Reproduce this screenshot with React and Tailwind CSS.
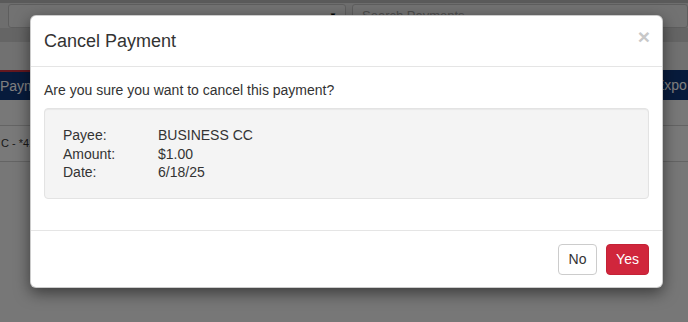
import React from "react";

const rows = [
  { label: "Payee:", value: "BUSINESS CC" },
  { label: "Amount:", value: "$1.00" },
  { label: "Date:", value: "6/18/25" },
];

export default function App() {
  return (
    <div
      className="relative w-[688px] h-[322px] overflow-hidden bg-[#eeeeee] text-[#333333]"
      style={{ fontFamily: '"Liberation Sans", Arial, sans-serif' }}
    >
      {/* page behind the dialog */}
      <div className="h-[3px] bg-[#b4b4b4]" />
      <div className="h-[25px] bg-[#dcdcdc] flex items-center gap-[6px] pl-[8px]">
        <div className="w-[338px] h-[24px] bg-[#e4e4e4] border border-[#bdbdbd] rounded-[3px] flex items-center justify-end pr-[8px]">
          <span className="text-[8px] leading-none text-black">▼</span>
        </div>
        <div className="flex-1 h-[24px] bg-[#e4e4e4] border border-[#bdbdbd] rounded-[3px] flex items-center pl-[9px] text-[13px] text-[#999999]">
          Search Payments
        </div>
      </div>
      <div className="h-[14px] bg-[#cacaca]" />
      <div className="h-[28px] bg-[#e2e2e2]" />
      <div className="h-[30px] bg-[#e8e8e8] flex justify-between">
        <div className="w-[60px] bg-[#0f3678] border-t-2 border-[#c9303f] text-white text-[14px] flex items-center">
          Payme
        </div>
        <div className="w-[60px] bg-[#0f3678] text-white text-[14px] flex items-center pl-[27px]">
          Expo
        </div>
      </div>
      <div className="h-[26px] bg-[#f0f0f0] border-b border-[#c8c8c8]" />
      <div className="h-[36px] bg-[#f2f2f2] border-b border-[#c8c8c8] flex items-center text-[11px] pl-[1px]">
        <span className="whitespace-nowrap">C - *41</span>
      </div>

      {/* backdrop */}
      <div className="absolute inset-0 bg-black/50" />

      {/* dialog */}
      <div className="absolute left-[30px] top-[15px] w-[633px] bg-white rounded-[6px] border border-black/20 shadow-[0_5px_15px_rgba(0,0,0,0.5)]">
        <div className="flex items-center justify-between px-[13px] pt-[15px] pb-[15px] border-b border-[#e5e5e5]">
          <h4 className="text-[18px] leading-[20px] text-[#333333]">Cancel Payment</h4>
          <button className="text-[21px] leading-none font-bold text-[#c8c8c8] -mr-[1px] -mt-[9px]">
            ×
          </button>
        </div>

        <div className="px-[13px] pt-[13px] pb-[31px]">
          <p className="text-[14px] leading-[20px] mb-[8px]">
            Are you sure you want to cancel this payment?
          </p>
          <div className="bg-[#f4f4f4] border border-[#e3e3e3] rounded-[4px] shadow-[inset_0_1px_1px_rgba(0,0,0,0.05)] pl-[18px] pt-[17px] pb-[16px]">
            {rows.map((r) => (
              <div key={r.label} className="flex text-[14px] leading-[18.5px]">
                <span className="w-[95px]">{r.label}</span>
                <span>{r.value}</span>
              </div>
            ))}
          </div>
        </div>

        <div className="border-t border-[#e5e5e5] flex justify-end gap-[9px] px-[13px] pt-[13px] pb-[12px]">
          <button className="w-[39px] h-[31px] bg-white border border-[#cccccc] rounded-[4px] text-[14px] text-[#333333]">
            No
          </button>
          <button className="w-[43px] h-[31px] bg-[#d0263c] border border-[#c42236] rounded-[4px] text-[14px] text-white">
            Yes
          </button>
        </div>
      </div>
    </div>
  );
}
